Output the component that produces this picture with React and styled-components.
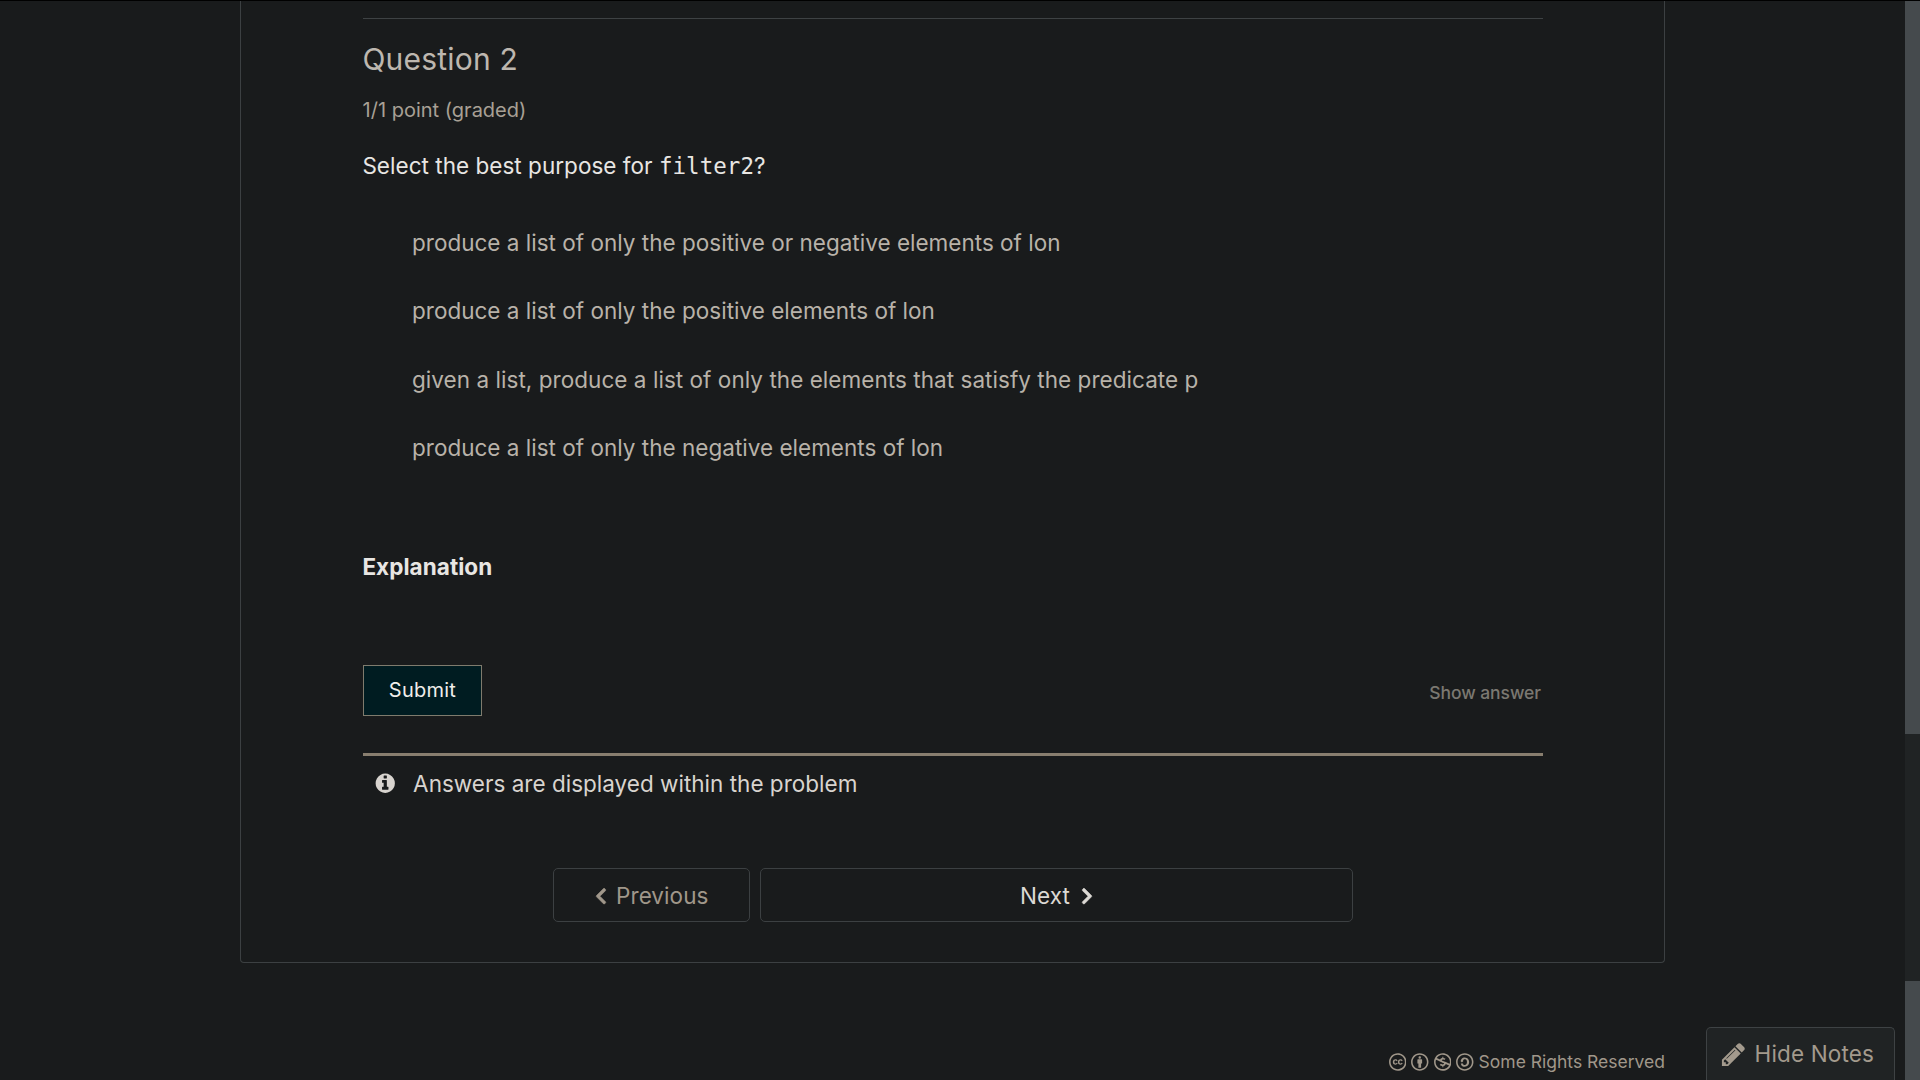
import React from "react";
import styled, { createGlobalStyle } from "styled-components";
import {
  FaChevronLeft,
  FaChevronRight,
  FaCreativeCommons,
  FaCreativeCommonsBy,
  FaCreativeCommonsNc,
  FaCreativeCommonsSa,
} from "react-icons/fa";

const GlobalStyle = createGlobalStyle`
  * { box-sizing: border-box; }
  body {
    margin: 0;
    background: #191b1c;
    color: #e8e6e3;
    font-family: Inter, "Liberation Sans", sans-serif;
    font-size: 22.5px;
    line-height: 36px;
    overflow: hidden;
  }
  p, h2, h3, ul { margin: 0; padding: 0; font-weight: 400; }
  button { font-family: inherit; margin: 0; }
`;

const Screen = styled.div`
  display: flex;
  width: 1920px;
  height: 1080px;
  border-top: 1px solid #000;
`;

const Page = styled.main`
  flex: 1;
  display: flex;
  flex-direction: column;
  padding: 0 240px;
`;

const Scrollbar = styled.div`
  width: 15px;
  display: flex;
  flex-direction: column;
  justify-content: space-between;
  background: #202324;
`;

const Thumb = styled.div`
  height: ${(p) => p.$height}px;
  background: #454a4d;
`;

const Card = styled.section`
  display: flex;
  flex-direction: column;
  height: 962px;
  padding: 17px 121px 40px 122px;
  border: 1px solid #3c4042;
  border-top: 0;
  border-radius: 0 0 4px 4px;

  > * {
    flex-shrink: 0;
  }
`;

const Divider = styled.div`
  height: 1px;
  background: #3e4244;
`;

const Title = styled.h2`
  margin-top: 22px;
  font-size: 30px;
  letter-spacing: 0.2px;
  text-indent: -0.6px;
  color: #bdb7af;
`;

const Progress = styled.p`
  margin-top: 21px;
  font-size: 20px;
  line-height: 24px;
  text-indent: -0.4px;
  color: #a8a095;
`;

const Prompt = styled.p`
  height: 36px;
  margin-top: 26px;
  letter-spacing: 0.03px;
  text-indent: -0.6px;
`;

const Code = styled.code`
  font-family: "DejaVu Sans Mono", monospace;
  font-size: 22.5px;
  line-height: 1;
`;

const Options = styled.ul`
  display: grid;
  gap: 32.4px;
  margin-top: 40.8px;
  padding-left: 49px;
  list-style: none;
  color: #b8b2a9;
`;

const Option = styled.li`
  height: 36px;
  letter-spacing: ${(p) => p.$tracking}px;
`;

const Explanation = styled.h3`
  margin-top: 83px;
  font-size: 22.5px;
  font-weight: 700;
  letter-spacing: 0.05px;
  text-indent: -0.6px;
`;

const Actions = styled.div`
  display: flex;
  align-items: center;
  justify-content: space-between;
  height: 51px;
  margin-top: 80px;
`;

const Submit = styled.button`
  width: 119px;
  height: 51px;
  padding: 0 0 1px;
  border: 1px solid #7f7b6d;
  background: #001c21;
  color: #f0eeeb;
  font-size: 20px;
  letter-spacing: 0.24px;
  line-height: 24px;
`;

const ShowAnswer = styled.button`
  padding: 5px 2px 0 0;
  border: 0;
  background: none;
  color: #7b7871;
  font-size: 17.5px;
  font-weight: 500;
  letter-spacing: -0.06px;
  line-height: 24px;
`;

const Notice = styled.div`
  display: flex;
  align-items: center;
  gap: 17px;
  height: 49px;
  margin-top: 37px;
  padding: 10px 0 0 10.6px;
  border-top: 3px solid #887e6f;
  color: #d8d4cf;
  letter-spacing: 0.01px;
`;

const InfoIcon = styled.svg`
  width: 22.5px;
  height: 22.5px;
  margin-top: -2px;
  fill: currentColor;
`;

const Pager = styled.nav`
  display: flex;
  justify-content: center;
  gap: 10px;
  margin-top: 66px;
`;

const PagerButton = styled.button`
  display: flex;
  align-items: center;
  justify-content: center;
  gap: ${(p) => p.$gap}px;
  width: ${(p) => p.$width}px;
  height: 54px;
  padding: 2px 0 0;
  border: 1px solid #3c4042;
  border-radius: 5px;
  background: none;
  color: ${(p) => p.$color};
  font-size: 22.5px;
  letter-spacing: 0.06px;
  line-height: 36px;

  svg {
    width: 12px;
    height: 18.4px;
    stroke: currentColor;
    stroke-width: 16px;
  }
`;

const License = styled.footer`
  display: flex;
  align-items: center;
  justify-content: flex-end;
  margin-top: 88px;
  gap: 5px;
  font-size: 17.5px;
  line-height: 22px;
  color: #a0978a;

  svg {
    width: 17.5px;
    height: 18px;
    margin-top: -1px;
  }
`;

const NotesToggle = styled.button`
  position: fixed;
  right: 25px;
  bottom: 0;
  display: flex;
  align-items: center;
  gap: 7.6px;
  width: 189px;
  height: 53px;
  padding: 0 0 0 13px;
  border: 1px solid #3e4244;
  border-bottom: 0;
  border-radius: 5px 5px 0 0;
  background: #202324;
  color: #a39a8d;
  font-size: 22.5px;
  letter-spacing: 0.14px;
  line-height: 36px;
`;

const PencilIcon = styled.svg`
  width: 27px;
  height: 27px;
  margin-top: 1px;
  fill: currentColor;
`;

const choices = [
  { text: "produce a list of only the positive or negative elements of lon", tracking: 0.01 },
  { text: "produce a list of only the positive elements of lon", tracking: 0.01 },
  { text: "given a list, produce a list of only the elements that satisfy the predicate p", tracking: 0.045 },
  { text: "produce a list of only the negative elements of lon", tracking: 0.01 },
];

export default function App() {
  return (
    <>
      <GlobalStyle />
      <Screen>
        <Page>
          <Card>
            <Divider />
            <Title>Question 2</Title>
            <Progress>1/1 point (graded)</Progress>
            <Prompt>
              Select the best purpose for <Code>filter2</Code>?
            </Prompt>
            <Options>
              {choices.map(({ text, tracking }) => (
                <Option key={text} $tracking={tracking}>
                  {text}
                </Option>
              ))}
            </Options>
            <Explanation>Explanation</Explanation>
            <Actions>
              <Submit>Submit</Submit>
              <ShowAnswer>Show answer</ShowAnswer>
            </Actions>
            <Notice>
              <InfoIcon viewBox="0 0 1792 1792">
                <path d="M1152 1376v-160q0-14-9-23t-23-9h-96v-512q0-14-9-23t-23-9h-320q-14 0-23 9t-9 23v160q0 14 9 23t23 9h96v320h-96q-14 0-23 9t-9 23v160q0 14 9 23t23 9h448q14 0 23-9t9-23zm-128-896v-160q0-14-9-23t-23-9h-192q-14 0-23 9t-9 23v160q0 14 9 23t23 9h192q14 0 23-9t9-23zm640 416q0 209-103 385.5t-279.5 279.5-385.5 103-385.5-103-279.5-279.5-103-385.5 103-385.5 279.5-279.5 385.5-103 385.5 103 279.5 279.5 103 385.5z" />
              </InfoIcon>
              <span>Answers are displayed within the problem</span>
            </Notice>
            <Pager>
              <PagerButton $width={197} $gap={9.5} $color="#a0978a">
                <FaChevronLeft />
                <span>Previous</span>
              </PagerButton>
              <PagerButton $width={593} $gap={11} $color="#dcd9d4">
                <span>Next</span>
                <FaChevronRight />
              </PagerButton>
            </Pager>
          </Card>
          <License>
            <FaCreativeCommons />
            <FaCreativeCommonsBy />
            <FaCreativeCommonsNc />
            <FaCreativeCommonsSa />
            <span>Some Rights Reserved</span>
          </License>
        </Page>
        <Scrollbar>
          <Thumb $height={733} />
          <Thumb $height={99} />
        </Scrollbar>
      </Screen>
      <NotesToggle>
        <PencilIcon viewBox="0 0 1792 1792">
          <path d="M491 1536l91-91-235-235-91 91v107h128v128h107zm523-928q0-22-22-22-10 0-17 7l-542 542q-7 7-7 17 0 22 22 22 10 0 17-7l542-542q7-7 7-17zm-54-192l416 416-832 832h-416v-416zm683 96q0 53-37 90l-166 166-416-416 166-165q36-38 90-38 53 0 91 38l235 234q37 39 37 91z" />
        </PencilIcon>
        <span>Hide Notes</span>
      </NotesToggle>
    </>
  );
}
